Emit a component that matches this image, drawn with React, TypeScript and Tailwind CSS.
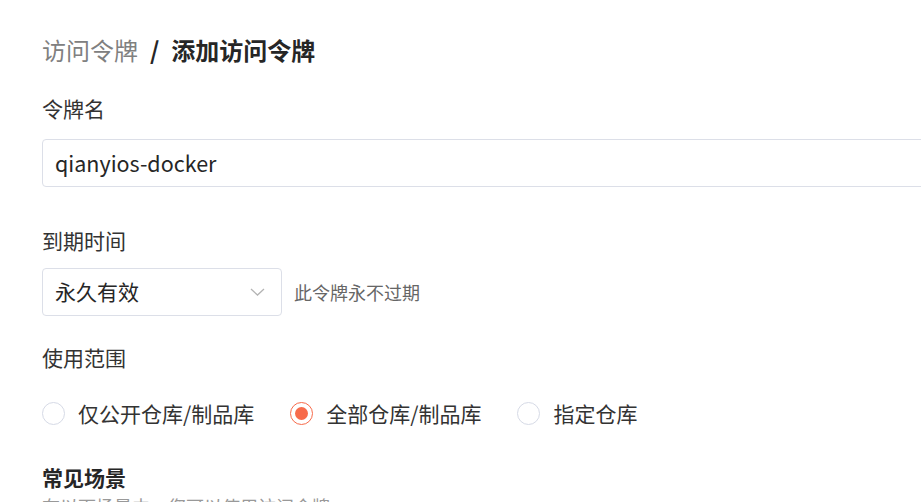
import React from "react";

const font = { fontFamily: '"Noto Sans CJK SC", "Noto Sans", sans-serif' };

function Radio({ checked, label }: { checked?: boolean; label: string }) {
  return (
    <label className="flex items-center gap-[13px] cursor-pointer">
      <span
        className={
          checked
            ? "w-[23px] h-[23px] rounded-full border border-[#f76b4b] flex items-center justify-center bg-white"
            : "w-[23px] h-[23px] rounded-full border border-[#d6dae6] bg-white"
        }
      >
        {checked && <span className="w-[13px] h-[13px] rounded-full bg-[#f76b4b]" />}
      </span>
      <span className="text-[21px] leading-[28px] text-[#333333]">{label}</span>
    </label>
  );
}

export default function App() {
  return (
    <div className="w-[921px] h-[502px] overflow-hidden bg-white" style={font}>
      <div className="pl-[42px] pt-[34px] flex flex-col">
        <div className="flex items-center text-[24px] leading-[32px]">
          <span className="text-[#808080]">访问令牌</span>
          <span className="mx-[12px] font-bold text-[#262626]">/</span>
          <span className="font-bold text-[#262626]">添加访问令牌</span>
        </div>

        <div className="mt-[28px] text-[21px] leading-[28px] text-[#333333]">令牌名</div>
        <div className="mt-[17px] h-[48px] w-[1000px] border border-[#dcdfe8] rounded-[4px] flex items-center px-[12px]">
          <span className="text-[21.5px] text-[#262626]">qianyios-docker</span>
        </div>

        <div className="mt-[39px] text-[21px] leading-[28px] text-[#333333]">到期时间</div>
        <div className="mt-[14px] flex items-center">
          <div className="h-[48px] w-[240px] border border-[#dcdfe8] rounded-[4px] flex items-center justify-between pl-[12px] pr-[16px]">
            <span className="text-[21px] text-[#262626]">永久有效</span>
            <svg width="15" height="8" viewBox="0 0 15 8" fill="none">
              <path d="M1 1l6.5 6L14 1" stroke="#b4b4b4" strokeWidth="1.3" />
            </svg>
          </div>
          <span className="ml-[12px] text-[18px] text-[#666666]">此令牌永不过期</span>
        </div>

        <div className="mt-[27px] text-[21px] leading-[28px] text-[#333333]">使用范围</div>
        <div className="mt-[28px] flex items-center">
          <Radio label="仅公开仓库/制品库" />
          <div className="ml-[36px]">
            <Radio checked label="全部仓库/制品库" />
          </div>
          <div className="ml-[36px]">
            <Radio label="指定仓库" />
          </div>
        </div>

        <div className="mt-[36px] text-[21px] leading-[28px] font-bold text-[#262626]">常见场景</div>
        <div className="mt-[3px] text-[18px] leading-[24px] text-[#999999]">在以下场景中，您可以使用访问令牌</div>
      </div>
    </div>
  );
}
